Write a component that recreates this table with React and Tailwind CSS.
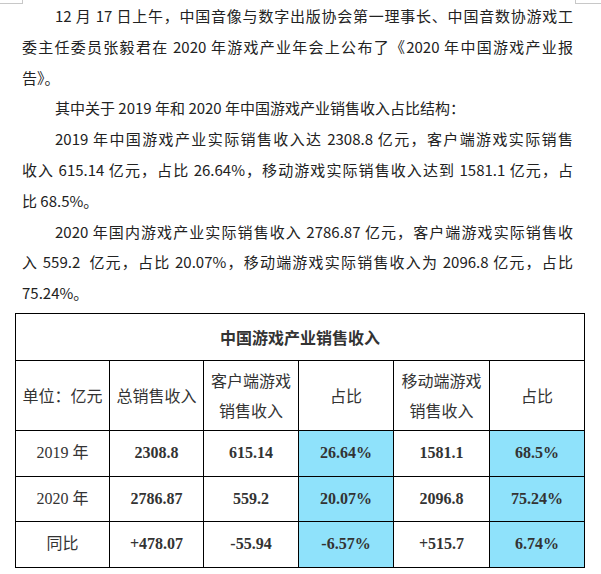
import React from "react";

const bodyFont = { fontFamily: '"Noto Sans CJK SC", sans-serif' };

const lines = [
  { text: "12 月 17 日上午，中国音像与数字出版协会第一理事长、中国音数协游戏工", indent: true, full: true },
  { text: "委主任委员张毅君在 2020 年游戏产业年会上公布了《2020 年中国游戏产业报", full: true },
  { text: "告》。" },
  { text: "其中关于 2019 年和 2020 年中国游戏产业销售收入占比结构：", indent: true },
  { text: "2019 年中国游戏产业实际销售收入达 2308.8 亿元，客户端游戏实际销售", indent: true, full: true },
  { text: "收入 615.14 亿元，占比 26.64%，移动游戏实际销售收入达到 1581.1 亿元，占", full: true },
  { text: "比 68.5%。" },
  { text: "2020 年国内游戏产业实际销售收入 2786.87 亿元，客户端游戏实际销售收", indent: true, full: true },
  { text: "入 559.2\u00a0\u00a0亿元，占比 20.07%，移动端游戏实际销售收入为 2096.8 亿元，占比", full: true },
  { text: "75.24%。" },
];

const rows = [
  ["2019 年", "2308.8", "615.14", "26.64%", "1581.1", "68.5%"],
  ["2020 年", "2786.87", "559.2", "20.07%", "2096.8", "75.24%"],
  ["同比", "+478.07", "-55.94", "-6.57%", "+515.7", "6.74%"],
];

const widths = ["w-[94px]", "w-[94px]", "w-[95px]", "w-[95px]", "w-[96px]", "w-[95px]"];

export default function App() {
  return (
    <div className="relative w-[601px] h-[574px] bg-white overflow-hidden text-[#222]" style={bodyFont}>
      {/* page margin marks */}
      <div className="absolute left-0 top-0 w-[23px] h-[4px] border-b border-r border-[#c8c8c8]" />
      <div className="absolute right-0 top-0 w-[26px] h-[4px] border-b border-l border-[#c8c8c8]" />

      <div className="pl-[22px] pr-[28px] pt-px text-[15px] leading-[30.8px]">
        {lines.map((l, i) => (
          <div
            key={i}
            className={
              "whitespace-nowrap " +
              (l.indent ? "pl-[33px] " : "") +
              (l.full ? "text-justify [text-align-last:justify]" : "text-left")
            }
          >
            {l.text}
          </div>
        ))}
      </div>

      <div className="pl-[15px] mt-[4px]">
        <table className="border-collapse text-[16px] text-[#333]">
          <tbody>
            <tr className="h-[47px]">
              <td colSpan={6} className="border border-black text-center font-bold">
                中国游戏产业销售收入
              </td>
            </tr>
            <tr className="h-[70px] leading-[30px]">
              <td className={widths[0] + " border border-black text-center"}>单位：亿元</td>
              <td className={widths[1] + " border border-black text-center"}>总销售收入</td>
              <td className={widths[2] + " border border-black text-center"}>
                客户端游戏
                <br />
                销售收入
              </td>
              <td className={widths[3] + " border border-black text-center"}>占比</td>
              <td className={widths[4] + " border border-black text-center"}>
                移动端游戏
                <br />
                销售收入
              </td>
              <td className={widths[5] + " border border-black text-center"}>占比</td>
            </tr>
            {rows.map((r, i) => (
              <tr key={i} className={i === 1 ? "h-[45px]" : "h-[46px]"}>
                {r.map((c, j) => (
                  <td
                    key={j}
                    className={
                      "border border-black text-center " +
                      (j === 3 || j === 5 ? "bg-[#8fe2fb] " : "") +
                      (j === 0 ? "" : "font-bold")
                    }
                    style={j === 0 ? { fontFamily: '"Liberation Serif", "Noto Sans CJK SC", serif' } : { fontFamily: '"Liberation Serif", serif' }}
                  >
                    {c}
                  </td>
                ))}
              </tr>
            ))}
          </tbody>
        </table>
      </div>
    </div>
  );
}
